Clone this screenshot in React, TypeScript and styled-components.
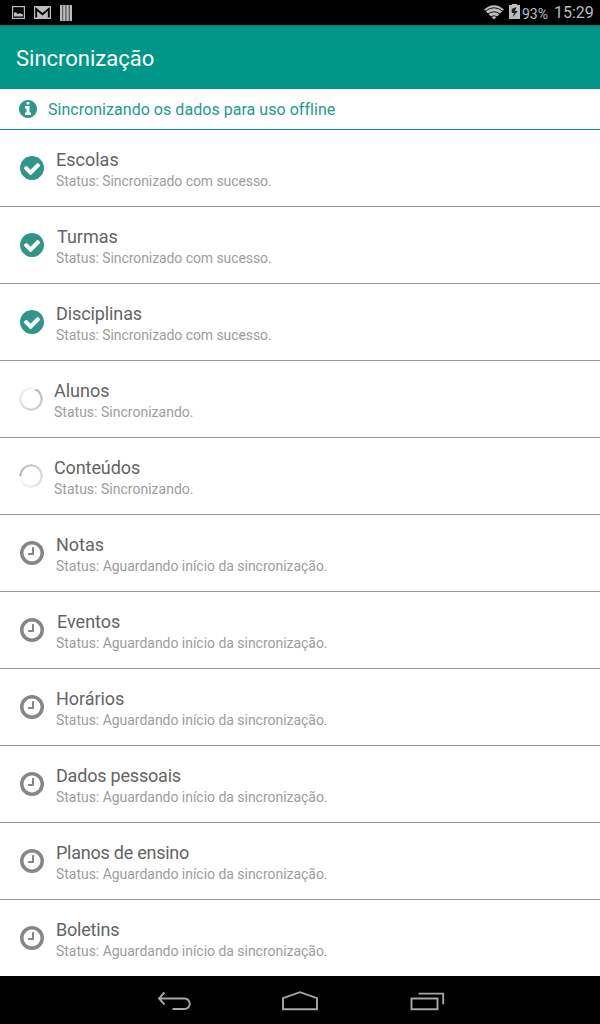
import React from 'react';
import styled, { createGlobalStyle } from 'styled-components';

const GlobalStyle = createGlobalStyle`
  * { box-sizing: border-box; }
  body { margin: 0; background: #fff; font-family: Roboto, "Liberation Sans", sans-serif; }
  svg { display: block; flex: none; }
`;

const Screen = styled.div`
  width: 600px;
  height: 1024px;
  display: flex;
  flex-direction: column;
  overflow: hidden;
  background: #fff;
`;

const StatusBar = styled.div`
  flex: none;
  height: 25px;
  padding: 0 6px 0 12px;
  display: flex;
  align-items: center;
  justify-content: space-between;
  background: #000;
  color: #bcbcbc;
`;

const Notifications = styled.div`
  display: flex;
  align-items: center;
  gap: 9px;
`;

const Indicators = styled.div`
  display: flex;
  align-items: center;
`;

const BatteryIcon = styled.svg`
  margin: 0 0 2px 5px;
`;

const Battery = styled.span`
  margin: 2px 0 0 2px;
  width: 32px;
  font-size: 14px;
  line-height: 20px;
`;

const Clock = styled.span`
  width: 40px;
  font-size: 16px;
  line-height: 20px;
  white-space: nowrap;
`;

const AppBar = styled.header`
  flex: none;
  height: 64px;
  padding: 3px 16px 0;
  display: flex;
  align-items: center;
  background: #009788;
  box-shadow: inset 0 3px 3px -2px rgba(0, 0, 0, 0.2);
`;

const AppTitle = styled.h1`
  margin: 0;
  color: #fff;
  font-size: 22px;
  font-weight: 400;
  line-height: 28px;
`;

const Info = styled.div`
  flex: none;
  height: 41px;
  padding-left: 19px;
  display: flex;
  align-items: center;
  gap: 11px;
  border-bottom: 1px solid #009788;
  color: #1c9c8c;
  font-size: 16px;
  letter-spacing: 0.04px;
`;

const List = styled.ul`
  flex: 1;
  min-height: 0;
  margin: 0;
  padding: 0;
  list-style: none;
  overflow: hidden;
`;

const Row = styled.li`
  height: 77px;
  padding-left: 20px;
  display: flex;
  align-items: center;
  border-bottom: 1px solid #989898;
  &:last-child { border-bottom-color: transparent; }
`;

const RowText = styled.div<{ $inset: number }>`
  padding-left: ${(p) => p.$inset}px;
  padding-top: 4px;
`;

const Name = styled.div<{ $shift: number; $tracking: number }>`
  padding-left: ${(p) => p.$shift}px;
  color: #646464;
  font-size: 18px;
  line-height: 22px;
  letter-spacing: ${(p) => p.$tracking}px;
`;

const Status = styled.div<{ $tracking: number }>`
  color: #9d9d9d;
  font-size: 14px;
  line-height: 21px;
  letter-spacing: ${(p) => p.$tracking}px;
`;

const Spinner = styled.div<{ $from: number }>`
  width: 24px;
  height: 24px;
  margin-left: -1px;
  border-radius: 50%;
  background: conic-gradient(from ${(p) => p.$from}deg, #bcbcbc, #f9f9f9);
  mask: radial-gradient(circle, transparent 9px, #000 9.8px, #000 11.5px, transparent 12px);
`;

const NavBar = styled.nav`
  flex: none;
  height: 48px;
  padding: 2px 155px 0 157px;
  display: flex;
  align-items: center;
  justify-content: space-between;
  background: #000;
`;

const HomeIcon = styled.svg`
  margin-right: 2px;
`;

const disc = 'M1664 896q0 209-103 385.5t-279.5 279.5-385.5 103-385.5-103-279.5-279.5-103-385.5 103-385.5 279.5-279.5 385.5-103 385.5 103 279.5 279.5 103 385.5z';
const glyphs = {
  done: 'M1412 734q0-28-18-46l-91-90q-19-19-45-19t-45 19l-408 407-226-226q-19-19-45-19t-45 19l-91 90q-18 18-18 46 0 27 18 45l362 362q19 19 45 19 27 0 46-19l543-543q18-18 18-45z',
  info: 'M1152 1376v-160q0-14-9-23t-23-9h-96v-512q0-14-9-23t-23-9h-320q-14 0-23 9t-9 23v160q0 14 9 23t23 9h96v320h-96q-14 0-23 9t-9 23v160q0 14 9 23t23 9h448q14 0 23-9t9-23zM1024 480v-160q0-14-9-23t-23-9h-192q-14 0-23 9t-9 23v160q0 14 9 23t23 9h192q14 0 23-9t9-23z',
  wait: 'M1024 544v448q0 14-9 23t-23 9h-320q-14 0-23-9t-9-23v-64q0-14 9-23t23-9h224v-352q0-14 9-23t23-9h64q14 0 23 9t9 23z',
};

function RoundIcon({ glyph, size, color }: { glyph: keyof typeof glyphs; size: number; color: string }) {
  return (
    <svg width={size} height={size} viewBox="128 128 1536 1536" fill={color}>
      {glyph === 'wait' ? (
        <>
          <circle cx="896" cy="896" r="656" fill="none" stroke={color} strokeWidth="224" />
          <path d={glyphs.wait} />
        </>
      ) : (
        <path fillRule="evenodd" d={glyphs[glyph] + disc} />
      )}
    </svg>
  );
}

type State = 'done' | 'busy' | 'wait';
const messages: Record<State, { text: string; tracking: number }> = {
  done: { text: 'Sincronizado com sucesso.', tracking: -0.08 },
  busy: { text: 'Sincronizando.', tracking: 0.01 },
  wait: { text: 'Aguardando início da sincronização.', tracking: -0.03 },
};

const items: { name: string; state: State; shift?: number; from?: number; tracking?: number }[] = [
  { name: 'Escolas', state: 'done' },
  { name: 'Turmas', state: 'done', shift: 1 },
  { name: 'Disciplinas', state: 'done', tracking: -0.1 },
  { name: 'Alunos', state: 'busy', from: 25 },
  { name: 'Conteúdos', state: 'busy', from: 270, tracking: -0.1 },
  { name: 'Notas', state: 'wait' },
  { name: 'Eventos', state: 'wait', shift: 1 },
  { name: 'Horários', state: 'wait', tracking: -0.05 },
  { name: 'Dados pessoais', state: 'wait', tracking: -0.2 },
  { name: 'Planos de ensino', state: 'wait', tracking: -0.25 },
  { name: 'Boletins', state: 'wait', tracking: -0.2 },
];

export default function App() {
  return (
    <Screen>
      <GlobalStyle />
      <StatusBar>
        <Notifications>
          <svg width="13" height="13" viewBox="0 0 13 13">
            <rect x="0.6" y="0.6" width="11.8" height="11.8" fill="none" stroke="#bcbcbc" strokeWidth="1.2" />
            <path d="M2 10.500V7L3.500 6l2 1.800L8 7.200l3 1.300v2z" fill="#bcbcbc" />
          </svg>
          <svg width="17" height="13" viewBox="0 0 17 13">
            <rect width="17" height="13" fill="#bcbcbc" />
            <path d="M2.200 11.500V3l6.300 5.300L14.800 3v8.500" fill="none" stroke="#000" strokeWidth="1.9" />
          </svg>
          <svg width="12" height="16" viewBox="0 0 12 16" fill="#bcbcbc">
            <path d="M0 0h2.500v16H0zM3.100 0h2.500v16H3.100zM6.300 0h2.500v16H6.300zM9.500 0H12v16H9.500z" />
          </svg>
        </Notifications>
        <Indicators>
          <svg width="20" height="15" viewBox="0 0 20 15">
            <path d="M0 4.500Q10-4 20 4.500L10 14.500z" fill="#bcbcbc" />
            <path d="M1 6.300Q10-.8 19 6.300M3.600 9.200q6.400-4.800 12.800 0M6.400 12q3.600-2.600 7.200 0" fill="none" stroke="#000" strokeWidth="0.9" />
          </svg>
          <BatteryIcon width="11" height="15" viewBox="0 0 11 15">
            <path d="M0 1h3V0h5v1h3v14H0z" fill="#bcbcbc" />
            <path d="M7.500 3L2.700 5v4h2.400l-1.300 4 5-6H6z" fill="#222" />
          </BatteryIcon>
          <Battery>93%</Battery>
          <Clock>15:29</Clock>
        </Indicators>
      </StatusBar>
      <AppBar>
        <AppTitle>Sincronização</AppTitle>
      </AppBar>
      <Info>
        <RoundIcon glyph="info" size={18} color="#30968a" />
        <span>Sincronizando os dados para uso offline</span>
      </Info>
      <List>
        {items.map((item) => (
          <Row key={item.name}>
            {item.state === 'busy' ? (
              <Spinner $from={item.from ?? 0} />
            ) : (
              <RoundIcon glyph={item.state} size={24} color={item.state === 'done' ? '#30968a' : '#868686'} />
            )}
            <RowText $inset={item.state === 'busy' ? 11 : 12}>
              <Name $shift={item.shift ?? 0} $tracking={item.tracking ?? 0}>{item.name}</Name>
              <Status $tracking={messages[item.state].tracking}>Status: {messages[item.state].text}</Status>
            </RowText>
          </Row>
        ))}
      </List>
      <NavBar>
        <svg width="34" height="20" viewBox="0 0 34 20" fill="none" stroke="#a6a6a6" strokeWidth="1.9">
          <path d="M7.500 1.500L2 7.500l5.500 6M2 7.500h25.500a5 5 0 0 1 0 10.500H15.500" />
        </svg>
        <HomeIcon width="38" height="20" viewBox="0 0 38 20" fill="none" stroke="#a6a6a6" strokeWidth="1.9">
          <path d="M2 18.200V7.200L19 1.200l17 6v11z" />
        </HomeIcon>
        <svg width="35" height="20" viewBox="0 0 35 20" fill="none" stroke="#a6a6a6" strokeWidth="1.9">
          <path d="M1.500 7.500h26v10.700h-26zM8.500 2.600h24.700v10.700" />
        </svg>
      </NavBar>
    </Screen>
  );
}
